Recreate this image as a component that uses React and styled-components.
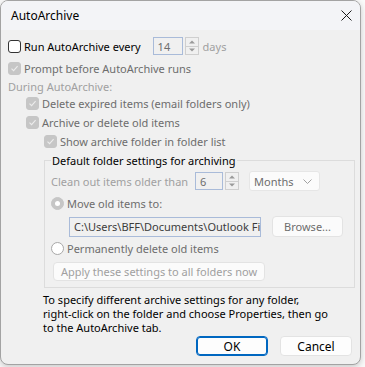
import React from 'react';
import styled, { createGlobalStyle } from 'styled-components';

const GlobalStyle = createGlobalStyle`
  html, body {
    margin: 0;
    padding: 0;
    background: #fafafa;
  }
  body {
    font-family: "Noto Sans", "Segoe UI", sans-serif;
    font-size: 11px;
    color: #000;
  }
`;

const Page = styled.div`
  width: 365px;
  height: 367px;
  overflow: hidden;
`;

const Dialog = styled.div`
  width: 361px;
  height: 365px;
  box-sizing: border-box;
  border: 1px solid #a3a3a3;
  border-radius: 8px;
  background: #f0f0f0;
  overflow: hidden;
  display: flex;
  flex-direction: column;
  box-shadow: 0 2px 6px rgba(0, 0, 0, 0.2);
`;

const TitleBar = styled.div`
  height: 29px;
  flex: none;
  background: #f3f4f7;
  display: flex;
  align-items: center;
  justify-content: space-between;
  padding: 0 8px 0 10px;
`;

const Title = styled.div`
  font-size: 12px;
  color: #000;
`;

const Body = styled.div`
  padding: 7px 7px 0 7px;
  display: flex;
  flex-direction: column;
`;

const Row = styled.div`
  display: flex;
  align-items: center;
  height: ${p => p.h || 19}px;
  margin-left: ${p => p.indent || 0}px;
  margin-top: ${p => p.mt || 0}px;
  white-space: nowrap;
`;

const Label = styled.span`
  color: ${p => (p.tone === 'dim' ? '#a0a0a0' : p.tone === 'mid' ? '#6d6d6d' : '#000')};
  margin-left: ${p => p.ml || 0}px;
  ${p => (p.w ? `width: ${p.w}px; flex: none;` : '')}
`;

const Box = styled.span`
  width: 13px;
  height: 13px;
  box-sizing: border-box;
  border-radius: 3px;
  flex: none;
  display: flex;
  align-items: center;
  justify-content: center;
  margin-right: 3px;
  border: 1px solid ${p => (p.checked ? '#c6c6c6' : '#333')};
  background: ${p => (p.checked ? '#c6c6c6' : '#fff')};
`;

const Radio = styled.span`
  width: 13px;
  height: 13px;
  box-sizing: border-box;
  border-radius: 50%;
  flex: none;
  margin-right: 3px;
  display: flex;
  align-items: center;
  justify-content: center;
  border: 1px solid ${p => (p.checked ? '#c6c6c6' : '#a8a8a8')};
  background: ${p => (p.checked ? '#c6c6c6' : '#fff')};

  &::after {
    content: '';
    display: ${p => (p.checked ? 'block' : 'none')};
    width: 5px;
    height: 5px;
    border-radius: 50%;
    background: #fff;
  }
`;

const Check = ({ checked, children, tone }) => (
  <>
    <Box checked={checked}>
      {checked && (
        <svg width="9" height="9" viewBox="0 0 9 9">
          <path d="M1.5 4.6 L3.6 6.7 L7.6 2.2" fill="none" stroke="#ececec" strokeWidth="1.1" />
        </svg>
      )}
    </Box>
    <Label tone={tone}>{children}</Label>
  </>
);

const Field = styled.div`
  width: ${p => p.w}px;
  height: ${p => p.h || 18}px;
  box-sizing: border-box;
  border: 1px solid ${p => p.border || '#a9bbd9'};
  background: ${p => p.bg || '#f0f0f0'};
  color: ${p => p.color || '#6d6d6d'};
  margin-left: ${p => p.ml || 0}px;
  padding-left: 4px;
  display: flex;
  align-items: center;
  overflow: hidden;
  white-space: nowrap;
  flex: none;
`;

const Spin = styled.div`
  width: 14px;
  height: 18px;
  box-sizing: border-box;
  border: 1px solid #cfcfcf;
  margin-left: 2px;
  display: flex;
  flex-direction: column;
  flex: none;
`;

const SpinHalf = styled.div`
  flex: 1;
  display: flex;
  align-items: center;
  justify-content: center;
  border-top: ${p => (p.bottom ? '1px solid #cfcfcf' : 'none')};
`;

const Spinner = () => (
  <Spin>
    <SpinHalf>
      <svg width="6" height="4" viewBox="0 0 6 4"><path d="M0 3.5 L3 0.5 L6 3.5Z" fill="#9a9a9a" /></svg>
    </SpinHalf>
    <SpinHalf bottom>
      <svg width="6" height="4" viewBox="0 0 6 4"><path d="M0 0.5 L3 3.5 L6 0.5Z" fill="#9a9a9a" /></svg>
    </SpinHalf>
  </Spin>
);

const Select = styled.div`
  width: 71px;
  height: 20px;
  box-sizing: border-box;
  margin-left: 10px;
  border: 1px solid #e6e6e6;
  border-radius: 3px;
  background: #fbfbfb;
  color: #6d6d6d;
  display: flex;
  align-items: center;
  justify-content: space-between;
  padding: 0 7px 0 4px;
  flex: none;
`;

const Group = styled.fieldset`
  margin: 3px 0 0 36px;
  width: 311px;
  box-sizing: border-box;
  border: 1px solid #dcdcdc;
  padding: 0 0 6px 6px;
  min-width: 0;
`;

const Legend = styled.legend`
  padding: 0 1px;
  color: #000;
  line-height: 15px;
`;

const Button = styled.div`
  width: ${p => p.w}px;
  height: ${p => p.h || 20}px;
  box-sizing: border-box;
  margin-left: ${p => p.ml || 0}px;
  border: ${p => (p.primary ? '1px solid #0067c0' : '1px solid #e3e3e3')};
  box-shadow: ${p => (p.primary ? 'inset 0 0 0 1px #0067c0' : 'none')};
  border-radius: 4px;
  background: ${p => (p.active ? '#fdfdfd' : '#fbfbfb')};
  color: ${p => p.color || '#000'};
  font-size: ${p => (p.active ? '12px' : '11px')};
  display: flex;
  align-items: center;
  justify-content: center;
  flex: none;
  white-space: nowrap;
`;

const Note = styled.div`
  margin: 5px 0 0 35px;
  line-height: 14px;
  color: #000;
`;

const Footer = styled.div`
  display: flex;
  justify-content: flex-end;
  gap: 12px;
  margin-top: 1px;
  padding-right: 1px;
`;

export default function App() {
  return (
    <Page>
      <GlobalStyle />
      <Dialog>
        <TitleBar>
          <Title>AutoArchive</Title>
          <svg width="11" height="11" viewBox="0 0 11 11">
            <path d="M0.5 0.5 L10.5 10.5 M10.5 0.5 L0.5 10.5" stroke="#1b1b1b" strokeWidth="1" />
          </svg>
        </TitleBar>
        <Body>
          <Row h={18}>
            <Check>Run AutoArchive every</Check>
            <Field w={30} ml={12}>14</Field>
            <Spinner />
            <Label tone="dim" ml={4}>days</Label>
          </Row>
          <Row h={20} mt={3}>
            <Check checked tone="mid">Prompt before AutoArchive runs</Check>
          </Row>
          <Row h={16}>
            <Label tone="dim">During AutoArchive:</Label>
          </Row>
          <Row h={18} indent={18}>
            <Check checked tone="mid">Delete expired items (email folders only)</Check>
          </Row>
          <Row h={20} indent={18}>
            <Check checked tone="mid">Archive or delete old items</Check>
          </Row>
          <Row h={18} indent={36}>
            <Check checked tone="mid">Show archive folder in folder list</Check>
          </Row>
          <Group>
            <Legend>Default folder settings for archiving</Legend>
            <Row h={20} mt={3}>
              <Label tone="dim" w={137}>Clean out items older than</Label>
              <Field w={28} ml={7}>6</Field>
              <Spinner />
              <Select>
                <span>Months</span>
                <svg width="9" height="5" viewBox="0 0 9 5"><path d="M0.5 0.5 L4.5 4.5 L8.5 0.5" fill="none" stroke="#a0a0a0" /></svg>
              </Select>
            </Row>
            <Row h={20} mt={2}>
              <Radio checked />
              <Label tone="mid">Move old items to:</Label>
            </Row>
            <Row h={21} mt={3}>
              <Field w={192} h={20} ml={18} color="#3c3c3c">C:\Users\BFF\Documents\Outlook Fi</Field>
              <Button w={71} h={21} ml={11} color="#6d6d6d">Browse...</Button>
            </Row>
            <Row h={18} mt={2}>
              <Radio />
              <Label tone="mid">Permanently delete old items</Label>
            </Row>
            <Row h={19} mt={5}>
              <Button w={212} h={19} ml={2} color="#a0a0a0">Apply these settings to all folders now</Button>
            </Row>
          </Group>
          <Note>
            To specify different archive settings for any folder,<br />
            right-click on the folder and choose Properties, then go<br />
            to the AutoArchive tab.
          </Note>
          <Footer>
            <Button w={72} primary active>OK</Button>
            <Button w={72} active>Cancel</Button>
          </Footer>
        </Body>
      </Dialog>
    </Page>
  );
}
